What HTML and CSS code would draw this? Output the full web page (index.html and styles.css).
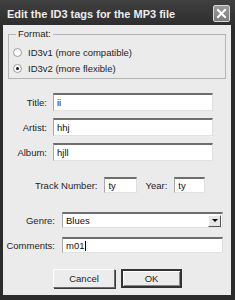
FILE: index.html
```html
<!DOCTYPE html>
<html lang="en">
<head>
    <meta charset="UTF-8">
    <title>Edit ID3 tags</title>
    <link rel="stylesheet" href="styles.css">
</head>
<body>
    <div class="dialog">
        <div class="title-bar">
            <span class="title">Edit the ID3 tags for the MP3 file</span>
            <span class="close-btn">
                <svg width="11" height="11" viewBox="0 0 11 11">
                    <path d="M2 2 L9 9 M9 2 L2 9" stroke="#fff" stroke-width="2" stroke-linecap="square"/>
                </svg>
            </span>
        </div>

        <div class="dialog-body">
            <!-- tag version -->
            <fieldset class="group">
                <legend>Format:</legend>
                <div class="radio-row"><span class="radio"></span>ID3v1 (more compatible)</div>
                <div class="radio-row"><span class="radio checked"></span>ID3v2 (more flexible)</div>
            </fieldset>

            <div class="tag-rows">
                <div class="field-row">
                    <span class="field-label">Title:</span>
                    <span class="text-box wide">ii</span>
                </div>
                <div class="field-row">
                    <span class="field-label">Artist:</span>
                    <span class="text-box wide">hhj</span>
                </div>
                <div class="field-row">
                    <span class="field-label">Album:</span>
                    <span class="text-box wide">hjll</span>
                </div>
            </div>

            <div class="track-row">
                <span>Track Number:</span>
                <span class="text-box small">ty</span>
                <span>Year:</span>
                <span class="text-box small">ty</span>
            </div>

            <div class="field-row lower genre-row">
                <span class="field-label">Genre:</span>
                <span class="select-box">
                    <span class="select-value">Blues</span>
                    <span class="drop-btn"><span class="arrow"></span></span>
                </span>
            </div>
            <div class="field-row lower comments-row">
                <span class="field-label">Comments:</span>
                <span class="text-box">m01<span class="caret"></span></span>
            </div>

            <div class="buttons">
                <button type="button" class="btn">Cancel</button>
                <button type="button" class="btn default">OK</button>
            </div>
        </div>
    </div>
</body>
</html>
```

FILE: styles.css
```css
body {
    margin: 0;
    background: #fff;
    font-family: "Liberation Sans", Arial, sans-serif;
}

.dialog {
    width: 235px;
    height: 300px;
    box-sizing: border-box;
    background: #2c2c2c;
    padding: 0 4px 5px 3px;
    display: flex;
    flex-direction: column;
}

.title-bar {
    height: 25px;
    display: flex;
    align-items: center;
    justify-content: space-between;
    background: linear-gradient(#404040, #2e2e2e);
    margin: 0 -4px 0 -3px;
    padding-left: 7px;
    padding-right: 5px;
}

.title {
    color: #ececec;
    font-size: 11px;
    font-weight: bold;
    margin-top: 3px;
}

.close-btn {
    width: 15px;
    height: 15px;
    border: 1px solid #d8d8d8;
    border-radius: 2px;
    background: linear-gradient(#9a9a9a, #7c7c7c);
    display: flex;
    align-items: center;
    justify-content: center;
    margin-top: 2px;
}

.dialog-body {
    flex: 1;
    background: #ebebeb;
    padding-top: 4px;
    font-size: 9.5px;
    color: #1e1e1e;
}

.group {
    margin: 0 5px;
    padding: 8px 0 5px 4px;
    border: 1px solid #b4b4b4;
}

.group legend {
    padding: 0 2px;
    margin-left: 3px;
    line-height: 10px;
}

.radio-row {
    display: flex;
    align-items: center;
    height: 10px;
}

.radio-row + .radio-row {
    margin-top: 6px;
}

.radio {
    width: 7px;
    height: 7px;
    border: 1px solid #9a9a9a;
    border-radius: 50%;
    background: #fff;
    margin-right: 6px;
    display: flex;
    align-items: center;
    justify-content: center;
}

.radio.checked::after {
    content: "";
    width: 3px;
    height: 3px;
    border-radius: 50%;
    background: #111;
}

.tag-rows {
    margin-top: 14px;
    display: flex;
    flex-direction: column;
    gap: 7px;
}

.field-row {
    display: flex;
    align-items: center;
    gap: 6px;
}

.field-label {
    width: 44px;
    text-align: right;
}

.text-box {
    height: 18px;
    box-sizing: border-box;
    background: #fff;
    border-top: 2px solid #6e6e6e;
    border-left: 1px solid #a8a8a8;
    border-right: 1px solid #dedede;
    border-bottom: 1px solid #e2e2e2;
    padding-left: 3px;
    display: flex;
    align-items: center;
    color: #111;
}

.text-box.wide {
    width: 160px;
}

.track-row {
    margin-top: 16px;
    padding-left: 32px;
    display: flex;
    align-items: center;
}

.track-row .text-box.small {
    height: 16px;
    width: 33px;
    margin: 0 8px 0 7px;
}

.track-row .text-box.small:last-child {
    width: 31px;
}

.lower {
    gap: 7px;
}

.lower .field-label {
    width: 52px;
}

.genre-row {
    margin-top: 19px;
}

.comments-row {
    margin-top: 9px;
}

.lower .text-box,
.select-box {
    width: 161px;
    height: 16px;
}

.select-box {
    box-sizing: border-box;
    background: #fff;
    border-top: 2px solid #6e6e6e;
    border-left: 1px solid #a8a8a8;
    border-right: 1px solid #dedede;
    border-bottom: 1px solid #e2e2e2;
    display: flex;
    align-items: center;
    justify-content: space-between;
    color: #111;
}

.select-value {
    padding-left: 3px;
}

.drop-btn {
    width: 13px;
    height: 12px;
    box-sizing: border-box;
    background: #e6e6e6;
    border: 1px solid;
    border-color: #fff #555 #555 #fff;
    display: flex;
    align-items: center;
    justify-content: center;
    margin-right: 1px;
}

.arrow {
    border-left: 3px solid transparent;
    border-right: 3px solid transparent;
    border-top: 3px solid #000;
}

.caret {
    width: 1px;
    height: 10px;
    background: #000;
    margin-left: 1px;
}

.buttons {
    margin-top: 16px;
    padding-left: 50px;
    display: flex;
    gap: 6px;
}

.btn {
    width: 62px;
    height: 19px;
    box-sizing: border-box;
    font-family: "Liberation Sans", Arial, sans-serif;
    font-size: 9.5px;
    color: #1e1e1e;
    background: #ececec;
    border: 1px solid;
    border-color: #fff #6a6a6a #6a6a6a #fff;
    box-shadow: 1px 1px 0 #3c3c3c;
    padding: 0;
}

.btn.default {
    width: 61px;
    border: 2px solid #333;
    box-shadow: inset 1px 1px 0 #fff, inset -1px -1px 0 #888;
}
```
